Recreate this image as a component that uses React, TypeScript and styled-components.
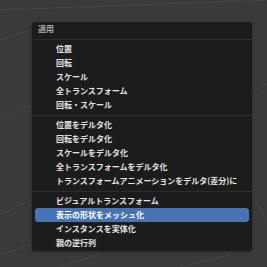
import React from 'react';
import styled, { createGlobalStyle } from 'styled-components';

const GlobalStyle = createGlobalStyle`
  html, body {
    margin: 0;
    padding: 0;
    background: #393939;
  }
  body {
    font-family: 'Noto Sans CJK JP', 'Noto Sans', sans-serif;
  }
`;

const Viewport = styled.div`
  position: relative;
  width: 267px;
  height: 267px;
  overflow: hidden;
  background: #3a3a3a;
  padding: 22px 0 0 32px;
  box-sizing: border-box;
`;

const GridLines = styled.svg`
  position: absolute;
  inset: 0;
  pointer-events: none;
`;

const Menu = styled.div`
  position: relative;
  width: 220px;
  background: #1c1c1c;
  border-radius: 3px;
  padding-bottom: 1px;
  box-shadow: 0 1px 3px rgba(0, 0, 0, 0.35);
`;

const Header = styled.div`
  height: 18px;
  box-sizing: border-box;
  padding: 0 0 0 6px;
  line-height: 14px;
  font-size: 8px;
  font-weight: 700;
  color: #a6a6a6;
  border-bottom: 1px solid #2c2c2c;
`;

const List = styled.div`
  display: flex;
  flex-direction: column;
  padding: 2px 3px 0 3px;
`;

const Item = styled.div<{ $active?: boolean }>`
  height: 14px;
  line-height: 14px;
  padding-left: 21px;
  font-size: 8px;
  font-weight: 700;
  white-space: nowrap;
  color: ${(p) => (p.$active ? '#ffffff' : '#e4e4e4')};
  background: ${(p) => (p.$active ? '#4772b3' : 'transparent')};
  border-radius: 3px;
`;

const Separator = styled.div`
  height: 1px;
  margin: 2.5px -3px;
  background: #2c2c2c;
`;

const groups: string[][] = [
  ['位置', '回転', 'スケール', '全トランスフォーム', '回転・スケール'],
  [
    '位置をデルタ化',
    '回転をデルタ化',
    'スケールをデルタ化',
    '全トランスフォームをデルタ化',
    'トランスフォームアニメーションをデルタ(差分)に',
  ],
  ['ビジュアルトランスフォーム', '表示の形状をメッシュ化', 'インスタンスを実体化', '親の逆行列'],
];

const activeItem = '表示の形状をメッシュ化';

const App: React.FC = () => {
  return (
    <>
      <GlobalStyle />
      <Viewport>
        <GridLines width="267" height="267" viewBox="0 0 267 267">
          <g stroke="#444444" strokeWidth="1" fill="none">
            <line x1="0" y1="40" x2="30" y2="30" />
            <line x1="0" y1="120" x2="30" y2="105" />
            <line x1="0" y1="215" x2="30" y2="200" />
            <line x1="0" y1="255" x2="30" y2="245" />
            <line x1="255" y1="90" x2="267" y2="84" />
            <line x1="255" y1="200" x2="267" y2="220" />
            <line x1="60" y1="267" x2="100" y2="254" />
            <line x1="180" y1="267" x2="230" y2="255" />
            <line x1="0" y1="10" x2="267" y2="0" />
          </g>
        </GridLines>
        <Menu>
          <Header>適用</Header>
          <List>
            {groups.map((group, gi) => (
              <React.Fragment key={gi}>
                {gi > 0 && <Separator />}
                {group.map((label) => (
                  <Item key={label} $active={label === activeItem}>
                    {label}
                  </Item>
                ))}
              </React.Fragment>
            ))}
          </List>
        </Menu>
      </Viewport>
    </>
  );
};

export default App;
